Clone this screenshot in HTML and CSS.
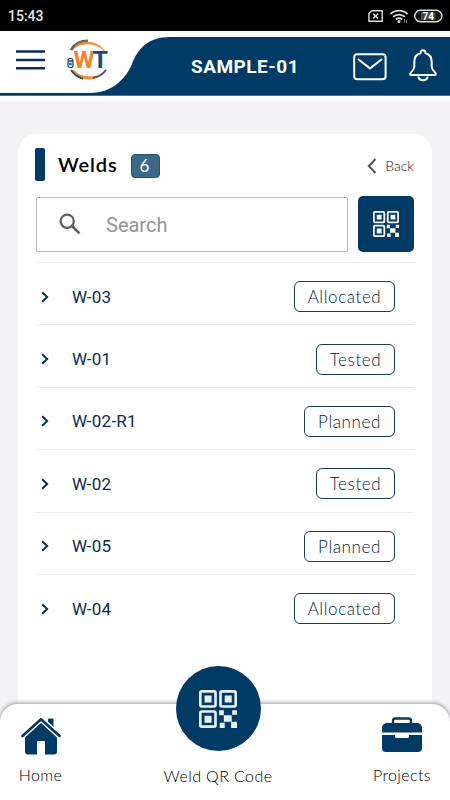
FILE: index.html
```html
<!DOCTYPE html>
<html lang="en">
<head>
    <meta charset="UTF-8">
    <meta name="viewport" content="width=device-width, initial-scale=1">
    <title>Welds</title>
    <link rel="stylesheet" href="styles.css">
</head>
<body>
    <svg class="symbols" width="0" height="0">
        <symbol id="icon-qr" viewBox="0 0 26 26">
            <g fill="none" stroke="currentColor" stroke-width="1.8">
                <rect x="0.9" y="0.9" width="10.4" height="10.4" rx="1"/>
                <rect x="14.7" y="0.9" width="10.4" height="10.4" rx="1"/>
                <rect x="0.9" y="14.7" width="10.4" height="10.4" rx="1"/>
            </g>
            <path fill="currentColor" d="M3.8 3.8h4.8v4.8H3.8zM17.6 3.8h4.8v4.8h-4.8zM3.8 17.6h4.8v4.8H3.8zM13.8 13.8H17v3.4h-3.2zM22.7 13.8H26V17h-3.3zM17 17.2h5.4v4.6H17zM14.2 22.4h3.4V26h-3.4zM22 21.8h4V26h-4z"/>
        </symbol>
        <symbol id="icon-chevron" viewBox="0 0 8 12">
            <path d="M1.2 1.2 6.2 6l-5 4.8" fill="none" stroke="currentColor" stroke-width="1.9"/>
        </symbol>
    </svg>

    <div class="status-bar">
        <span class="clock">15:43</span>
        <svg class="status-icons" width="76" height="16" viewBox="0 0 76 16">
            <path d="M4.8 2.7h10.4v10.6H1.9V5.5z" fill="none" stroke="#ddd" stroke-width="1.4" stroke-linejoin="round"/>
            <path d="m6.2 5.7 4.8 4.8m0-4.8-4.8 4.8" stroke="#ddd" stroke-width="1.5"/>
            <g fill="none" stroke="#ddd" stroke-width="1.8">
                <path d="M23.4 6.1a12.5 12.5 0 0 1 17.2 0"/>
                <path d="M26.2 8.9a8.3 8.3 0 0 1 11.6 0"/>
                <path d="M28.9 11.5a4.5 4.5 0 0 1 6.2 0"/>
            </g>
            <circle cx="32" cy="13.4" r="1.5" fill="#ddd"/>
            <path d="M37.5 11v3.5m2-2V15" stroke="#888" stroke-width="1"/>
            <rect x="47.7" y="2.2" width="27.2" height="11.6" rx="5.8" fill="#111" stroke="#ddd" stroke-width="1.4"/>
            <path d="M54 4h14.5v8H54z" fill="#444"/>
            <text class="battery" x="61.3" y="12" text-anchor="middle">74</text>
        </svg>
    </div>

    <header class="header">
        <svg class="header-shape" width="450" height="70" viewBox="0 0 450 70">
            <path d="M0 62H90C113 62 126 47 132 33C138 17 149 6 170 6H450V64.5H0Z" fill="#003b66"/>
            <path d="M0 64.5h450" stroke="#4c7592" stroke-width="1"/>
        </svg>
        <div class="header-content">
            <svg class="menu" width="29" height="20" viewBox="0 0 29 20">
                <path d="M0 1.5h29M0 10h29M0 18.3h29" stroke="#0b2d5a" stroke-width="2.4"/>
            </svg>
            <svg class="logo" width="44" height="44" viewBox="0 0 44 44">
                <path d="M5 11C9 4 16 2 22 2" fill="none" stroke="#666" stroke-width="3"/>
                <path d="M9 7C18 0 33 1 40 14C31 4 19 3 9 9Z" fill="#ef8d3b"/>
                <path d="M5 31C12 43 32 44 40 31C34 38 17 41 8 31Z" fill="#ef8d3b"/>
                <path d="M27 39C33 38 37 35 40 31" fill="none" stroke="#555" stroke-width="2"/>
                <path d="M5 31C8 36 12 38 17 40" fill="none" stroke="#174c79" stroke-width="1.6"/>
                <rect x="2" y="19.5" width="5" height="9" rx="2" fill="#dce6ee" stroke="#174c79" stroke-width="1.2"/>
                <path d="M2.4 22h4.4M3 25h3.2" stroke="#174c79" stroke-width="1.3"/>
                <text class="logo-text" x="7.5" y="29" fill="#f5822a" textLength="21" lengthAdjust="spacingAndGlyphs">W</text>
                <text class="logo-text" x="26.5" y="29" fill="#164d7d" textLength="15.5" lengthAdjust="spacingAndGlyphs">T</text>
            </svg>
            <h1 class="project">SAMPLE-01</h1>
            <svg class="mail" width="34" height="28" viewBox="0 0 34 28">
                <rect x="1.2" y="1.2" width="31.4" height="25" rx="3" fill="none" stroke="#fff" stroke-width="2"/>
                <path d="M5.5 6.5 17 15.4 28.5 6.5" fill="none" stroke="#fff" stroke-width="2" stroke-linecap="round" stroke-linejoin="round"/>
            </svg>
            <svg class="bell" width="28" height="34" viewBox="0 0 28 34">
                <path d="M1.2 25.2C1.2 22.5 5.3 22 5.3 17.5V13C5.3 8 8 5.2 11.5 4.3C11.5 .2 16.5 .2 16.5 4.3C20 5.2 22.7 8 22.7 13V17.5C22.7 22 26.8 22.5 26.8 25.2Q26.8 26 26 26H2Q1.2 26 1.2 25.2Z" fill="none" stroke="#fff" stroke-width="2" stroke-linejoin="round"/>
                <path d="M9.3 27.5a4.8 4.8 0 0 0 9.4 0" fill="none" stroke="#fff" stroke-width="2"/>
            </svg>
        </div>
    </header>

    <main class="card">
        <div class="title-row">
            <span class="accent"></span>
            <h2>Welds</h2>
            <span class="count">6</span>
            <a class="back">
                <svg width="10" height="16" viewBox="0 0 10 16"><path d="M8.5 1 1.8 8l6.7 7" fill="none" stroke="#555" stroke-width="2"/></svg>
                <span>Back</span>
            </a>
        </div>

        <div class="search-row">
            <div class="search">
                <svg width="22" height="22" viewBox="0 0 22 22">
                    <circle cx="8.2" cy="8.2" r="6.6" fill="none" stroke="#606060" stroke-width="2.2"/>
                    <path d="m12.8 12.8 7.6 7.6" stroke="#606060" stroke-width="2.7"/>
                </svg>
                <span>Search</span>
            </div>
            <button class="scan"><svg width="26" height="26"><use href="#icon-qr"/></svg></button>
        </div>

        <ul class="weld-list">
            <li>
                <svg class="chevron" width="8" height="12"><use href="#icon-chevron"/></svg>
                <span class="name">W-03</span>
                <span class="status allocated">Allocated</span>
            </li>
            <li>
                <svg class="chevron" width="8" height="12"><use href="#icon-chevron"/></svg>
                <span class="name">W-01</span>
                <span class="status tested">Tested</span>
            </li>
            <li>
                <svg class="chevron" width="8" height="12"><use href="#icon-chevron"/></svg>
                <span class="name">W-02-R1</span>
                <span class="status planned">Planned</span>
            </li>
            <li>
                <svg class="chevron" width="8" height="12"><use href="#icon-chevron"/></svg>
                <span class="name">W-02</span>
                <span class="status tested">Tested</span>
            </li>
            <li>
                <svg class="chevron" width="8" height="12"><use href="#icon-chevron"/></svg>
                <span class="name">W-05</span>
                <span class="status planned">Planned</span>
            </li>
            <li>
                <svg class="chevron" width="8" height="12"><use href="#icon-chevron"/></svg>
                <span class="name">W-04</span>
                <span class="status allocated">Allocated</span>
            </li>
        </ul>
    </main>

    <nav class="bottom-nav">
        <a class="nav-item home">
            <svg width="40" height="38" viewBox="0 0 40 38">
                <path d="M27 2.5Q27 1.5 28 1.5H31.5Q32.5 1.5 32.5 2.5V13L27 8.5Z" fill="#003b66"/>
                <path d="M4 20 20 5.5 36 20V34.5Q36 37.5 33 37.5H24V25Q24 24 23 24H17Q16 24 16 25V37.5H7Q4 37.5 4 34.5Z" fill="#003b66"/>
                <path d="M1.5 19 20 2.2 38.5 19" fill="none" stroke="#fff" stroke-width="5.6"/>
                <path d="M1.5 19 20 2.2 38.5 19" fill="none" stroke="#003b66" stroke-width="2.6" stroke-linecap="round" stroke-linejoin="round"/>
            </svg>
            <span>Home</span>
        </a>
        <a class="nav-item qr">
            <span class="qr-circle"><svg width="38" height="38"><use href="#icon-qr"/></svg></span>
            <span>Weld QR Code</span>
        </a>
        <a class="nav-item projects">
            <svg width="40" height="36" viewBox="0 0 40 36">
                <path d="M11 7V4Q11 1.5 13.5 1.5H26.5Q29 1.5 29 4V7" fill="none" stroke="#003b66" stroke-width="2.4"/>
                <path d="M4 6H36Q40 7 40 11V15.5H0V11Q0 7 4 6Z" fill="#003b66"/>
                <path d="M0 18H13V19.5Q13 21 14.5 21H25.5Q27 21 27 19.5V18H40V31Q40 35 36 35H4Q0 35 0 31Z" fill="#003b66"/>
            </svg>
            <span>Projects</span>
        </a>
    </nav>
</body>
</html>
```
FILE: styles.css
```css
* {
    box-sizing: border-box;
}

body {
    margin: 0;
    height: 800px;
    display: flex;
    flex-direction: column;
    overflow: hidden;
    background-color: #f3f3f6;
    font-family: Lato, "Open Sans", sans-serif;
    color: #111;
}

svg {
    display: block;
    flex-shrink: 0;
}

.symbols {
    position: absolute;
}

.status-bar {
    height: 31px;
    flex-shrink: 0;
    display: flex;
    justify-content: space-between;
    align-items: center;
    padding: 1px 7px 0 8px;
    background-color: #000;
}

.clock {
    font: 500 14px Roboto, sans-serif;
    color: #e4e4e4;
}

.battery {
    font: bold 10px Roboto, sans-serif;
    fill: #fff;
}

.header {
    height: 70px;
    flex-shrink: 0;
    display: grid;
    background-color: #fff;
}

.header-shape,
.header-content {
    grid-area: 1 / 1;
}

.header-content {
    display: flex;
    align-items: flex-start;
    padding: 0 13px 0 16px;
}

.menu {
    margin-top: 19px;
}

.logo {
    margin: 8px 0 0 21px;
}

.logo-text {
    font: bold 23px Roboto, sans-serif;
}

.project {
    flex: 1;
    margin: 24px 0 0 81px;
    font: bold 19px/23px Roboto, sans-serif;
    letter-spacing: 0.5px;
    color: #fff;
}

.mail {
    margin: 22px 22px 0 0;
}

.bell {
    margin-top: 18px;
}

.card {
    flex: 1;
    margin: 33px 18px 0;
    padding: 14px 18px 0;
    border-radius: 18px 18px 0 0;
    background-color: #fff;
}

.title-row {
    height: 33px;
    display: flex;
    align-items: center;
    margin-left: -1px;
}

.accent {
    width: 10px;
    height: 33px;
    border-radius: 2px;
    background-color: #003b66;
}

.title-row h2 {
    width: 61px;
    margin: 0 12px 1px 13px;
    font-size: 20px;
    font-weight: 600;
    letter-spacing: 0.9px;
    color: #000;
}

.count {
    width: 29px;
    height: 24px;
    margin-top: 3px;
    padding-right: 2px;
    border: 1px solid #1d547b;
    border-radius: 4px;
    background-color: #3a698a;
    color: #fff;
    font-size: 17px;
    line-height: 22px;
    text-align: center;
}

.back {
    display: flex;
    align-items: center;
    gap: 8px;
    margin: 2px 0 0 auto;
    font-size: 14px;
    font-weight: 300;
    color: #222;
}

.search-row {
    display: flex;
    gap: 10px;
    margin-top: 15px;
}

.search {
    flex: 1;
    height: 55px;
    margin-top: 1px;
    display: flex;
    align-items: center;
    gap: 26px;
    padding-left: 22px;
    border: 1px solid #bababa;
    border-radius: 2px;
    font: 20px Roboto, sans-serif;
    color: #939393;
}

.search svg {
    margin: -2px -1px 0 0;
}

.scan {
    width: 56px;
    height: 56px;
    display: flex;
    align-items: center;
    justify-content: center;
    padding: 0;
    border: none;
    border-radius: 5px;
    background-color: #003b66;
    color: #fff;
}

.weld-list {
    margin: 10px 0 0;
    padding: 0;
    list-style: none;
}

.weld-list li {
    height: 62.4px;
    display: flex;
    align-items: center;
    padding: 6px 19px 0 5px;
    border-top: 1px solid #ececec;
    color: #0b2c4c;
}

.name {
    margin-left: 23px;
    font: 17px Roboto, sans-serif;
    letter-spacing: 0.25px;
}

.status {
    height: 31px;
    margin-left: auto;
    border: 1px solid #163d5c;
    border-radius: 6px;
    font-size: 17px;
    font-weight: 300;
    line-height: 30px;
    text-align: center;
    letter-spacing: 0.6px;
    color: #001f3d;
}

.allocated {
    width: 101px;
}

.tested {
    width: 79px;
}

.planned {
    width: 91px;
}

.bottom-nav {
    position: absolute;
    left: 0;
    top: 704px;
    width: 450px;
    height: 96px;
    display: flex;
    justify-content: space-between;
    align-items: flex-end;
    padding: 0 19px 15px 18px;
    border-radius: 18px 18px 0 0;
    background-color: #fff;
    box-shadow: 0 -1px 4px rgba(0, 0, 0, 0.4);
    font-size: 16px;
    font-weight: 300;
    line-height: 20px;
    letter-spacing: 0.4px;
    color: #000;
}

.nav-item {
    display: flex;
    flex-direction: column;
    align-items: center;
}

.home {
    width: 45px;
    gap: 10px;
}

.qr {
    width: 112px;
    margin: 0 0 -1px 0;
    gap: 15px;
    white-space: nowrap;
}

.projects {
    width: 58px;
    gap: 12px;
}

.qr-circle {
    width: 85px;
    height: 85px;
    display: flex;
    align-items: center;
    justify-content: center;
    border-radius: 50%;
    background-color: #003b66;
    color: #e8f1fa;
}
```
